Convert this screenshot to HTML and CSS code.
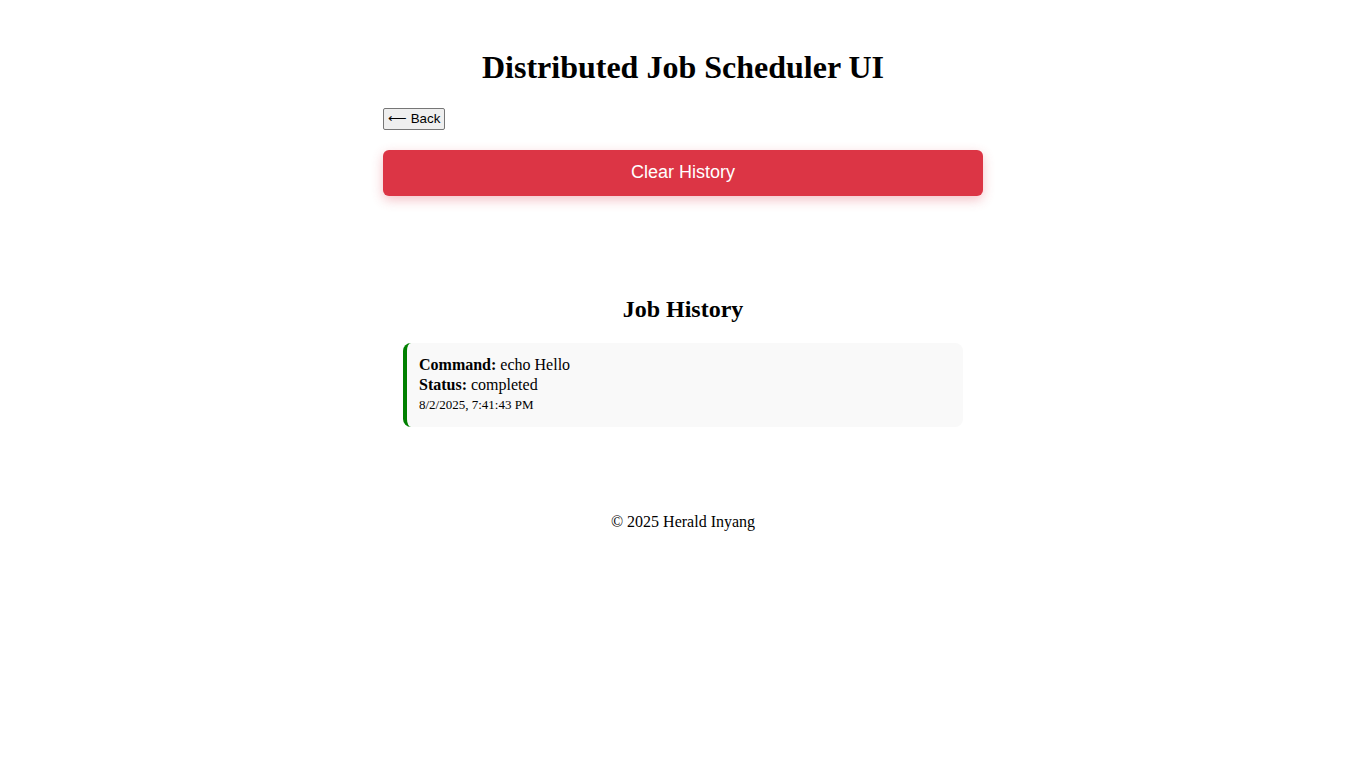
FILE: index.html
```html
<!DOCTYPE html>
<html>
<head>
<meta charset="utf-8">
<title>Distributed Job Scheduler UI</title>
<link rel="stylesheet" href="styles.css">
</head>
<body>
<div class="app">
  <h1 class="title">Distributed Job Scheduler UI</h1>
  <div class="nav"><button class="back">⟵ Back</button></div>
  <button class="clear">Clear History</button>
  <section class="history">
    <h2 class="history-title">Job History</h2>
    <div class="job-card">
      <div class="line"><strong>Command:</strong> echo Hello</div>
      <div class="line"><strong>Status:</strong> completed</div>
      <div class="line small">8/2/2025, 7:41:43 PM</div>
    </div>
  </section>
  <footer class="footer">© 2025 Herald Inyang</footer>
</div>
</body>
</html>
```
FILE: styles.css
```css
body {
  margin: 8px;
  font-family: "Liberation Serif", "Times New Roman", serif;
  color: #000;
  background: #fff;
}
.app {
  width: 600px;
  margin: 0 auto;
  padding: 20px;
}
.title {
  font-size: 32px;
  text-align: center;
  margin: 21.44px 0;
  line-height: 37px;
}
.nav { line-height: 0; }
.back {
  font-family: "Liberation Sans", Arial, sans-serif;
  font-size: 13.33px;
  line-height: normal;
  height: 22px;
  padding: 1px 4px;
  border: 1px solid #767676;
  border-radius: 2px;
  background: #efefef;
  color: #000;
}
.clear {
  display: block;
  width: 100%;
  height: 46px;
  margin-top: 20px;
  border: none;
  border-radius: 6px;
  background: #dc3545;
  color: #fff;
  font-family: "Liberation Sans", Arial, sans-serif;
  font-size: 18px;
  box-shadow: 0 4px 12px rgba(220, 53, 69, 0.3);
}
.history {
  padding: 79px 20px 0;
}
.history-title {
  font-size: 24px;
  line-height: 28px;
  text-align: center;
  margin: 19.92px 0;
}
.job-card {
  background: #f9f9f9;
  border-left: 4px solid green;
  border-radius: 8px;
  padding: 12px;
  line-height: 20px;
}
.small { font-size: 13px; }
.footer {
  margin-top: 86px;
  text-align: center;
  font-size: 16px;
  line-height: 18px;
}
```
